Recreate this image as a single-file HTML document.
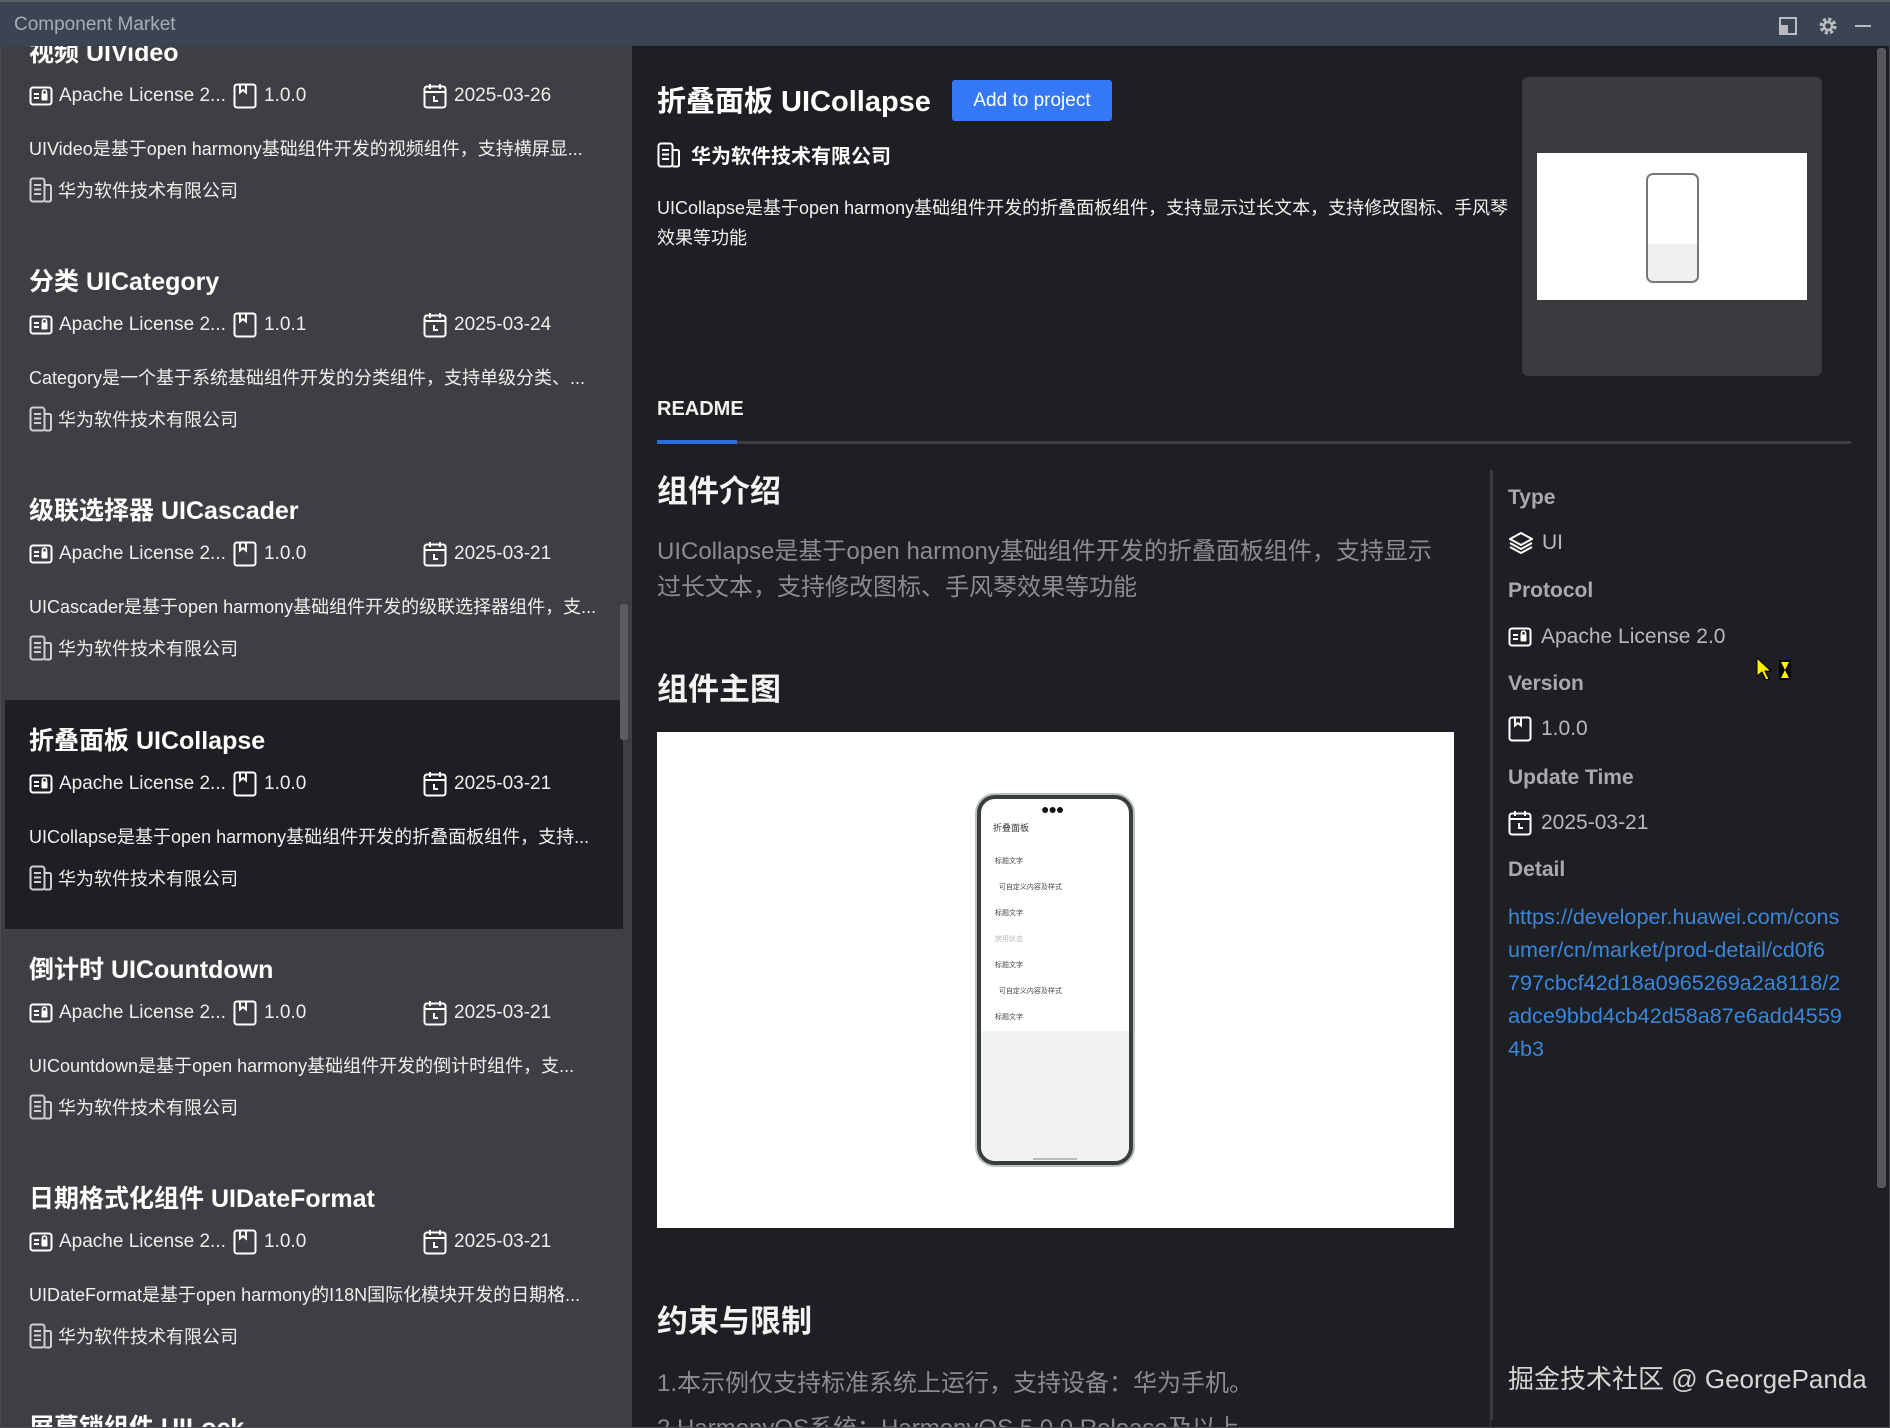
<!DOCTYPE html>
<html><head><meta charset="utf-8"><style>
*{margin:0;padding:0;box-sizing:border-box}
html{overflow:hidden;width:1890px;height:1428px}
body{width:1890px;height:1428px;overflow:hidden;background:#1e1f22;font-family:"Liberation Sans","Noto Sans CJK SC",sans-serif;position:relative;color:#fff}
#wrap{position:absolute;left:0;top:0;width:1890px;height:1428px;overflow:hidden}
.a{position:absolute;white-space:nowrap}
#tb{left:0;top:0;width:1890px;height:46px;background:#3b4452;border-top:2px solid #5a5f66}
#left{left:0;top:46px;width:632px;height:1382px;background:#3e3f42;overflow:hidden}
.item{position:absolute;left:5px;width:618px;height:229px}
.sel{background:#1e1f22}
.t{font-size:25px;font-weight:bold;left:24px}
.m{font-size:19px;color:#eee;display:flex;align-items:center}
.d{font-size:18px;color:#f0f0f0;left:24px}
.c{font-size:18px;color:#eee}
svg{display:block}
.gray{color:#8b8c8f}
</style></head><body><div id="wrap">
<div id="tb" class="a"><span class="a" style="left:14px;top:12px;font-size:19px;color:#a8adb5">Component Market</span>
<svg class="a" style="left:1778px;top:14px" width="20" height="20"><rect x="2" y="2" width="16" height="16" fill="none" stroke="#b8bcc2" stroke-width="2"/><rect x="2" y="9" width="8" height="9" fill="#b8bcc2"/></svg>
<svg class="a" style="left:1817px;top:13px" width="22" height="22" viewBox="0 0 22 22"><circle cx="11" cy="11" r="6.5" fill="none" stroke="#b8bcc2" stroke-width="4" stroke-dasharray="3 2.1"/><circle cx="11" cy="11" r="4" fill="none" stroke="#b8bcc2" stroke-width="2.5"/></svg>
<div class="a" style="left:1855px;top:23px;width:16px;height:2px;background:#b8bcc2"></div>
</div>

<div id="left" class="a">
<div class="a" style="left:620px;top:558px;width:8px;height:136px;background:#5c5d60;border-radius:3px"></div>
</div>

<script>
const lic='<svg width="24" height="24" viewBox="0 0 24 24"><rect x="1.5" y="3.5" width="21" height="17" rx="2.5" fill="none" stroke="#fff" stroke-width="2"/><path d="M5 10h5M5 14h5" stroke="#fff" stroke-width="2"/><rect x="12.5" y="9.5" width="6" height="7" rx="1" fill="#fff"/><path d="M13.5 10V8a2 2 0 0 1 4 0v2" stroke="#fff" stroke-width="1.6" fill="none"/></svg>';
const ver='<svg width="24" height="26" viewBox="0 0 24 26"><rect x="1.5" y="1.5" width="21" height="23" rx="2.5" fill="none" stroke="#fff" stroke-width="2"/><path d="M7 1.5v8l3-2.5 3 2.5v-8" fill="none" stroke="#fff" stroke-width="2"/></svg>';
const cal='<svg width="24" height="26" viewBox="0 0 24 26"><rect x="1.5" y="3.5" width="21" height="21" rx="2.5" fill="none" stroke="#fff" stroke-width="2"/><path d="M1.5 9h21M7 1v5M17 1v5M11 13v5h4" fill="none" stroke="#fff" stroke-width="2"/></svg>';
const comp='<svg width="24" height="26" viewBox="0 0 24 26"><rect x="1.5" y="1.5" width="14" height="23" rx="2.5" fill="none" stroke="#fff" stroke-width="2"/><path d="M15.5 8h5a1.5 1.5 0 0 1 1.5 1.5v13.5a1.5 1.5 0 0 1-1.5 1.5h-5M5 8h7M5 12.5h7M5 17h7" fill="none" stroke="#fff" stroke-width="2"/></svg>';
const items=[
['视频 UIVideo','1.0.0','2025-03-26','UIVideo是基于open harmony基础组件开发的视频组件，支持横屏显...'],
['分类 UICategory','1.0.1','2025-03-24','Category是一个基于系统基础组件开发的分类组件，支持单级分类、...'],
['级联选择器 UICascader','1.0.0','2025-03-21','UICascader是基于open harmony基础组件开发的级联选择器组件，支...'],
['折叠面板 UICollapse','1.0.0','2025-03-21','UICollapse是基于open harmony基础组件开发的折叠面板组件，支持...'],
['倒计时 UICountdown','1.0.0','2025-03-21','UICountdown是基于open harmony基础组件开发的倒计时组件，支...'],
['日期格式化组件 UIDateFormat','1.0.0','2025-03-21','UIDateFormat是基于open harmony的I18N国际化模块开发的日期格...'],
['屏幕锁组件 UILock','1.0.0','2025-03-21','']];
let h='';
items.forEach((it,i)=>{
 h+=`<div class="item ${i==3?'sel':''}" style="top:${(i*229.2-34).toFixed(0)}px">
 <div class="a t" style="top:21px">${it[0]}</div>
 <div class="a m" style="left:24px;top:72px">${lic}<span style="margin-left:6px">Apache License 2...</span></div>
 <div class="a m" style="left:228px;top:71px">${ver}<span style="margin-left:7px">${it[1]}</span></div>
 <div class="a m" style="left:418px;top:71px">${cal}<span style="margin-left:7px">${it[2]}</span></div>
 <div class="a d" style="top:123px">${it[3]}</div>
 <div class="a m c" style="left:24px;top:165px">${comp.replace(/#fff/g,'#cfd0d2')}<span style="margin-left:5px">华为软件技术有限公司</span></div>
 </div>`;
});
document.getElementById('left').insertAdjacentHTML('afterbegin',h);
</script>

<div class="a" style="left:657px;top:83px;font-size:29px;font-weight:bold;line-height:38px">折叠面板 UICollapse</div>
<div class="a" style="left:952px;top:80px;width:160px;height:41px;background:#3478f6;border-radius:3px;font-size:19px;line-height:41px;text-align:center">Add to project</div>
<div class="a" style="left:657px;top:140px;display:flex;align-items:center;font-size:20px;font-weight:bold"><svg width="24" height="26" viewBox="0 0 24 26"><rect x="1.5" y="1.5" width="14" height="23" rx="2.5" fill="none" stroke="#fff" stroke-width="2"/><path d="M15.5 8h5a1.5 1.5 0 0 1 1.5 1.5v13.5a1.5 1.5 0 0 1-1.5 1.5h-5M5 8h7M5 12.5h7M5 17h7" fill="none" stroke="#fff" stroke-width="2"/></svg><span style="margin-left:10px">华为软件技术有限公司</span></div>
<div class="a" style="left:657px;top:193px;width:860px;white-space:normal;font-size:18px;line-height:30px;color:#f0f0f0">UICollapse是基于open harmony基础组件开发的折叠面板组件，支持显示过长文本，支持修改图标、手风琴效果等功能</div>
<div class="a" style="left:1522px;top:77px;width:300px;height:299px;background:#3a3b3e;border-radius:6px"></div>
<div class="a" style="left:1537px;top:153px;width:270px;height:147px;background:#fff"><div class="a" style="left:109px;top:20px;width:53px;height:110px;border:2px solid #777;border-radius:7px;background:linear-gradient(#fff 65%,#eef0f1 65%)"></div></div>

<div class="a" style="left:657px;top:398px;font-size:20px;font-weight:bold;color:#f2f2f2">README</div>
<div class="a" style="left:657px;top:441px;width:1194px;height:3px;background:#3d3e42"></div>
<div class="a" style="left:657px;top:440px;width:80px;height:4px;background:#2a6fdb"></div>

<div class="a" style="left:1490px;top:470px;width:3px;height:958px;background:#3a3b3e"></div>

<div class="a" style="left:657px;top:466px;font-size:31px;font-weight:bold;color:#f4f4f4">组件介绍</div>
<div class="a" style="left:657px;top:534px;width:792px;white-space:normal;font-size:24px;line-height:36px;color:#8b8c8f">UICollapse是基于open harmony基础组件开发的折叠面板组件，支持显示过长文本，支持修改图标、手风琴效果等功能</div>
<div class="a" style="left:657px;top:664px;font-size:31px;font-weight:bold;color:#f4f4f4">组件主图</div>
<div class="a" style="left:657px;top:732px;width:797px;height:496px;background:#fff">
 <div class="a" style="left:320px;top:63px;width:156px;height:370px;border:4px solid #3a3d3c;border-radius:18px;background:#fff;overflow:hidden;box-shadow:0 0 0 2px #b8c2bd">
  <div class="a" style="left:0;top:232px;width:148px;height:140px;background:#f1f2f3"></div>
  <div class="a" style="left:60px;top:6px;width:30px;height:10px;font-size:14px;line-height:8px;color:#111;letter-spacing:-1px">●●●</div>
  <div class="a" style="left:12px;top:22px;font-size:9px;color:#333">折叠面板</div>
  <div class="a" style="left:14px;top:50px;font-size:7px;color:#444;line-height:26px">标题文字<br>&nbsp;&nbsp;可自定义内容及样式<br>标题文字<br><span style="color:#bbb">禁用状态</span><br>标题文字<br>&nbsp;&nbsp;可自定义内容及样式<br>标题文字</div>
  <div class="a" style="left:52px;top:359px;width:44px;height:2px;background:#bbb"></div>
 </div>
</div>
<div class="a" style="left:657px;top:1296px;font-size:31px;font-weight:bold;color:#f4f4f4">约束与限制</div>
<div class="a gray" style="left:657px;top:1363px;font-size:24px">1.本示例仅支持标准系统上运行，支持设备：华为手机。</div>
<div class="a gray" style="left:657px;top:1408px;font-size:24px;height:20px;overflow:hidden">2.HarmonyOS系统：HarmonyOS 5.0.0 Release及以上。</div>
<div class="a" style="left:1491px;top:1420px;width:399px;height:8px;background:#1e1f22"></div>

<div class="a" style="left:1508px;top:486px;font-size:21px;font-weight:bold;color:#a9aaad">Type</div>
<div class="a" style="left:1508px;top:531px;display:flex;align-items:center;font-size:21px;color:#b8b9bc"><svg width="26" height="24" viewBox="0 0 26 24"><path d="M13 2L2 8l11 6 11-6z" fill="none" stroke="#fff" stroke-width="2" stroke-linejoin="round"/><path d="M2 12l11 6 11-6M2 16l11 6 11-6" fill="none" stroke="#fff" stroke-width="2" stroke-linejoin="round"/></svg><span style="margin-left:8px">UI</span></div>
<div class="a" style="left:1508px;top:579px;font-size:21px;font-weight:bold;color:#a9aaad">Protocol</div>
<div class="a" style="left:1508px;top:625px;display:flex;align-items:center;font-size:21px;color:#b8b9bc"><svg width="24" height="24" viewBox="0 0 24 24"><rect x="1.5" y="3.5" width="21" height="17" rx="2.5" fill="none" stroke="#fff" stroke-width="2"/><path d="M5 10h5M5 14h5" stroke="#fff" stroke-width="2"/><rect x="12.5" y="9.5" width="6" height="7" rx="1" fill="#fff"/><path d="M13.5 10V8a2 2 0 0 1 4 0v2" stroke="#fff" stroke-width="1.6" fill="none"/></svg><span style="margin-left:9px">Apache License 2.0</span></div>
<div class="a" style="left:1508px;top:672px;font-size:21px;font-weight:bold;color:#a9aaad">Version</div>
<div class="a" style="left:1508px;top:716px;display:flex;align-items:center;font-size:21px;color:#b8b9bc"><svg width="24" height="26" viewBox="0 0 24 26"><rect x="1.5" y="1.5" width="21" height="23" rx="2.5" fill="none" stroke="#fff" stroke-width="2"/><path d="M7 1.5v8l3-2.5 3 2.5v-8" fill="none" stroke="#fff" stroke-width="2"/></svg><span style="margin-left:9px">1.0.0</span></div>
<div class="a" style="left:1508px;top:766px;font-size:21px;font-weight:bold;color:#a9aaad">Update Time</div>
<div class="a" style="left:1508px;top:810px;display:flex;align-items:center;font-size:21px;color:#b8b9bc"><svg width="24" height="26" viewBox="0 0 24 26"><rect x="1.5" y="3.5" width="21" height="21" rx="2.5" fill="none" stroke="#fff" stroke-width="2"/><path d="M1.5 9h21M7 1v5M17 1v5M11 13v5h4" fill="none" stroke="#fff" stroke-width="2"/></svg><span style="margin-left:9px">2025-03-21</span></div>
<div class="a" style="left:1508px;top:858px;font-size:21px;font-weight:bold;color:#a9aaad">Detail</div>
<div class="a" style="left:1508px;top:900px;font-size:21.6px;line-height:33px;color:#3b86da">https://developer.huawei.com/cons<br>umer/cn/market/prod-detail/cd0f6<br>797cbcf42d18a0965269a2a8118/2<br>adce9bbd4cb42d58a87e6add4559<br>4b3</div>
<svg class="a" style="left:1755px;top:656px" width="40" height="28"><path d="M2 2v18l5-4 4 8 3-1-4-8h6z" fill="#ffef00" stroke="#000" stroke-width="1"/><rect x="24" y="4" width="12" height="20" fill="#000"/><path d="M26 6h8l-4 8 4 8h-8l4-8z" fill="#ffef00"/></svg>
<div class="a" style="left:1508px;top:1359px;font-size:26px;color:#d6d6d6">掘金技术社区 @ GeorgePanda</div>

<div class="a" style="left:1877px;top:48px;width:9px;height:1140px;background:#55575a;border-radius:3px"></div>
<div class="a" style="left:0;top:46px;width:1890px;height:1382px;border:1px solid #4a4b4e;border-top:none;pointer-events:none"></div>
</div></body></html>
